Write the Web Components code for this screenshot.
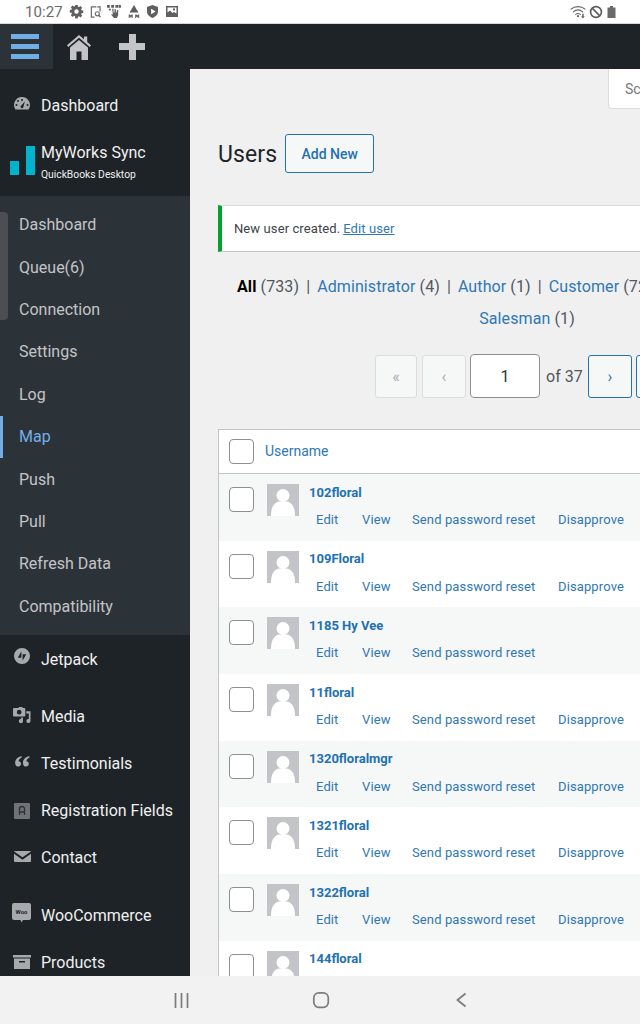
<!DOCTYPE html>
<html lang="en"><head><meta charset="utf-8"><title>Users</title>
<style>
html,body{margin:0;padding:0;background:#f0f0f1}
body{font-family:Roboto,"Liberation Sans",sans-serif;width:640px;height:1024px;overflow:hidden}
</style></head><body>
<app-shell></app-shell>
<script>
const ICONS={
 gear:'<path fill="#5f5f5f" fill-rule="evenodd" d="M5.300 0h2.400l.3 1.700 1 .4L10.500 1l1.700 1.700-1.100 1.500.4 1 1.700.3v2.400l-1.700.3-.4 1 1.100 1.500-1.700 1.700-1.500-1.100-1 .4-.3 1.700H5.300L5 11.200l-1-.4-1.500 1.100L.8 10.200l1.100-1.500-.4-1L-.2 7.400V5l1.700-.3.4-1L.8 2.200 2.500.5 4 1.600l1-.4zM6.500 4.300a2.200 2.200 0 1 0 0 4.400 2.200 2.200 0 0 0 0-4.400z"/>',
 shot:'<path fill="none" stroke="#6a6a6a" stroke-width="1.300" d="M7 1H1.500v11H5M11 6V1H8"/><circle cx="8" cy="8.500" r="2.200" fill="none" stroke="#6a6a6a" stroke-width="1.200"/><path stroke="#6a6a6a" stroke-width="1.300" d="M9.500 10l2 2"/>',
 hand:'<path fill="#5f5f5f" d="M0 0h3v3H0zM4.500 0h3v3h-3zM9 0h3v3H9zM12.500 0h2.500v3h-2.500zM2 4h2v2H2zM5.500 4h1.500v4h1V4.500h1.500V8h1V5.500H12V11l-1.500 3H7.500L4.500 10.500l.8-.8 1 .8z"/>',
 tri:'<path fill="#5f5f5f" d="M6 0l4.500 7.500h-9z"/><path fill="#5f5f5f" d="M0 9.500h1.200l.8 1 .8-1H4V13H3v-1.700L2.200 12.500h-.4L1 11.300V13H0zM6.500 9.500h1.200l.8 1 .8-1H10.500V13h-1v-1.700L8.700 12.500h-.4L7.500 11.300V13h-1z" transform="translate(.7 0)"/>',
 shield:'<path fill="#5f5f5f" fill-rule="evenodd" d="M6 0l6 2v5c0 3.500-3 6-6 7-3-1-6-3.500-6-7V2zM4.500 4v6l5-3z"/>',
 pic:'<path fill="#5f5f5f" fill-rule="evenodd" d="M0 0h12v11H0zM1.500 1.500v5l2.500-2L6.500 7l1.500-1 2.500 1.500v-6zM8 2.300a1.100 1.100 0 1 1 0 2.200 1.100 1.100 0 0 1 0-2.200z"/>',
 wifi:'<g fill="none" stroke="#666" stroke-width="1.200" stroke-linecap="round"><path d="M1 4.500C5 .8 12 .8 16 4.500"/><path d="M3.500 7.300C6.500 4.800 10.500 4.800 13.500 7.300"/><path d="M6 10c1.600-1.200 3.400-1.200 5 0"/></g><circle cx="8.500" cy="12" r="1.200" fill="#666"/><path fill="#666" d="M13 9.500h1.600V12h1.200L13.800 14.500 11.800 12H13z"/>',
 block:'<circle cx="8" cy="8" r="6.200" fill="none" stroke="#5f5f5f" stroke-width="1.900"/><path stroke="#5f5f5f" stroke-width="1.900" d="M3.600 3.600l8.800 8.800"/>',
 batt:'<path fill="#6a6a6a" d="M3 0h3v1.500h2.500V12H.5V1.500H3z"/>',
 home:'<path fill="#c3c4c7" d="M12 1l5 4.200V2.500h3.200v5.400L24 11.200l-1.300 1.700L12 3.800 1.300 12.900 0 11.200z"/><path fill="#c3c4c7" fill-rule="evenodd" d="M12 6l9 7.400V26H3V13.400zM9.500 17.500V26h5v-8.500z"/>',
 gauge:'<path fill="#a7aaad" fill-rule="evenodd" d="M8 0a8 8 0 0 1 6.600 12.500H1.400A8 8 0 0 1 8 0zM4 3a1 1 0 1 0 0 2 1 1 0 0 0 0-2zM8 2a1 1 0 1 0 0 2 1 1 0 0 0 0-2zM2.500 7a1 1 0 1 0 0 2 1 1 0 0 0 0-2zM13.500 7a1 1 0 1 0 0 2 1 1 0 0 0 0-2zM10.800 4.500L7.500 8.300a1.500 1.500 0 1 0 2 1.200z"/>',
 jet:'<path fill="#a7aaad" fill-rule="evenodd" d="M8 0a8 8 0 1 1 0 16A8 8 0 0 1 8 0zM7.400 3.200L3.800 9.700h3.600zM8.600 6.300v6.500l3.600-6.500z"/>',
 media:'<path fill="#a7aaad" fill-rule="evenodd" d="M4 1h1.500L6.500 0h3l1 1H12a1 1 0 0 1 1 1v7a1 1 0 0 1-1 1H1a1 1 0 0 1-1-1V2a1 1 0 0 1 1-1zM6.500 3a2.500 2.500 0 1 0 0 5 2.500 2.500 0 0 0 0-5z"/><path fill="#a7aaad" d="M14 4.500h4.500v10.300a2.200 2.200 0 1 1-1.800-2.100V7h-2.700zM10.500 11v4a2.200 2.200 0 1 1-2-2.200V11z"/>',
 quote:'<path fill="#a7aaad" d="M7 0C3 1 0 3.500 0 7.500 0 10 1.400 11.500 3.400 11.500c1.800 0 3-1.300 3-3C6.400 6.800 5.200 5.700 3.700 5.700 4.100 4 5.300 2.700 7 2zM15.500 0c-4 1-7 3.500-7 7.500 0 2.500 1.400 4 3.400 4 1.800 0 3-1.300 3-3 0-1.700-1.200-2.800-2.700-2.800.4-1.700 1.600-3 3.300-3.700z"/>',
 reg:'<path fill="#6f7377" d="M0 1a1 1 0 0 1 1-1h14a1 1 0 0 1 1 1v14a1 1 0 0 1-1 1H1a1 1 0 0 1-1-1z"/><path fill="none" stroke="#2c3338" stroke-width="1.300" d="M5.500 12V6a2.500 2.500 0 0 1 5 0v6M5.500 9h5"/>',
 mail:'<path fill="#a7aaad" d="M.8 0h15.400a.8.8 0 0 1 .7.500L8.500 6.300.1.500A.8.8 0 0 1 .8 0zM0 2.800l8.500 5.900L17 2.800V10a1 1 0 0 1-1 1H1a1 1 0 0 1-1-1z"/>',
 woo:'<path fill="#a7aaad" d="M2 0h15a2 2 0 0 1 2 2v13a2 2 0 0 1-2 2h-6l-1.500 2.500L8.500 17H2a2 2 0 0 1-2-2V2a2 2 0 0 1 2-2z"/><text x="9.500" y="11" text-anchor="middle" font-family="Roboto,sans-serif" font-weight="700" font-size="6" fill="#1d2327">Woo</text>',
 box:'<path fill="#a7aaad" fill-rule="evenodd" d="M0 0h18v2.500H0zM1 3.500h16V14H1zM6 6v1.400h6V6z"/>'
};
const svg=(n,w,h,vb)=>`<svg width="${w}" height="${h}" viewBox="${vb||`0 0 ${w} ${h}`}" aria-hidden="true" style="display:block;overflow:visible">${ICONS[n]}</svg>`;
const def=(name,css,html)=>customElements.define(name,class extends HTMLElement{
 constructor(){super();this.attachShadow({mode:'open'});}
 connectedCallback(){this.shadowRoot.innerHTML=`<style>${css}</style>`+(typeof html==='function'?html(this):html);}
});

def('status-bar',`:host{display:flex;align-items:center;height:24px;flex:none;background:#fff;padding-left:25px;color:#6a6a6a;box-sizing:border-box;border-bottom:1px solid #d8d8d8}
.t{font:15px/1 Roboto,sans-serif;letter-spacing:.1px;margin-right:7px;padding-top:1px}
.i{display:flex;align-items:center}
.r{margin-left:auto;display:flex;align-items:center;padding-right:24px}`,
`<span class="t">10:27</span>
<span class="i">
<span style="margin-right:8px">${svg('gear',12,13)}</span>
<span style="margin-right:6px">${svg('shot',11,12,'0 0 12 13')}</span>
<span style="margin-right:7px">${svg('hand',14,13,'0 0 15 14')}</span>
<span style="margin-right:8px">${svg('tri',11,13)}</span>
<span style="margin-right:8px">${svg('shield',11,13,'0 0 12 14')}</span>
<span>${svg('pic',12,11)}</span></span>
<span class="r"><span style="margin-right:3px">${svg('wifi',16,14,'0 0 17 15')}</span><span style="margin-right:4px">${svg('block',14,14,'0 0 16 16')}</span>${svg('batt',9,12)}</span>`);

def('admin-bar',`:host{display:flex;height:45px;flex:none;background:#1d2327;align-items:center}
.m{width:53px;height:45px;box-sizing:border-box;padding-left:11px;background:#2c3338;display:flex;flex-direction:column;justify-content:center;gap:5px;align-items:flex-start}
.m i{display:block;width:28px;height:5px;background:#72aee6}
.h{margin-left:14px}
.p{margin-left:28px;width:26px;height:26px;position:relative}
.p:before,.p:after{content:"";position:absolute;background:#c3c4c7}
.p:before{left:9.500px;top:0;width:7px;height:26px}
.p:after{left:0;top:9.500px;width:26px;height:7px}`,
`<div class="m"><i></i><i></i><i></i></div><div class="h">${svg('home',24,26)}</div><div class="p"></div>`);

def('menu-item',`:host{display:flex;align-items:center;box-sizing:border-box;height:var(--h,47px);color:#f0f0f1;font-size:16px}
.i{width:41px;flex:none;display:flex;justify-content:flex-start;padding-left:var(--ix,13px);box-sizing:border-box;transform:translateY(var(--iy,-1px))}`,
h=>`<span class="i">${svg(h.getAttribute('icon'),+h.getAttribute('w'),+h.getAttribute('h'),h.getAttribute('vb'))}</span><slot></slot>`);

def('sub-item',`:host{display:flex;align-items:center;height:42.400px;padding-left:19px;color:#c3c4c7;font-size:16px;box-sizing:border-box}
:host([active]){color:#72aee6;box-shadow:inset 3px 0 0 #72aee6}`,`<slot></slot>`);

def('side-menu',`:host{display:block;width:190px;flex:none;background:#1d2327;position:relative;overflow:hidden;box-shadow:1px 0 0 #e0e0e0}
.top{padding-top:12px}
.brand{height:67px;display:flex;box-sizing:border-box}
.logo{width:41px;flex:none;display:flex;align-items:flex-end;gap:7px;padding:17px 0 21px 10px;box-sizing:border-box}
.logo i{display:block;width:9px;background:#00b4d0}
.tt{color:#f0f0f1;font-size:16px;line-height:20px;padding-top:14px}
.st{color:#f0f0f1;font-size:10.300px;line-height:14px;margin-top:5px}
.sub{background:#2c3338;height:439px;padding-top:7.600px;box-sizing:border-box}
.gap{height:10px}
.gap2{height:11px}
.sb{position:absolute;left:0;top:143px;width:8px;height:108px;background:#4b4f53;border-radius:0 4px 4px 0}`,
`<div class="top"><menu-item icon="gauge" w="16" h="13" style="--h:48px;--iy:-2px;--ix:14px">Dashboard</menu-item></div>
<div class="brand"><div class="logo"><i style="height:14px"></i><i style="height:29px"></i></div>
<div><div class="tt">MyWorks Sync</div><div class="st">QuickBooks Desktop</div></div></div>
<div class="sub"><sub-item>Dashboard</sub-item><sub-item>Queue(6)</sub-item><sub-item>Connection</sub-item><sub-item>Settings</sub-item><sub-item>Log</sub-item><sub-item active>Map</sub-item><sub-item>Push</sub-item><sub-item>Pull</sub-item><sub-item>Refresh Data</sub-item><sub-item>Compatibility</sub-item></div>
<menu-item icon="jet" w="16" h="16" style="--h:48px;--iy:-3px;--ix:14px">Jetpack</menu-item>
<div class="gap"></div>
<menu-item icon="media" w="18" h="17" vb="0 0 19 18" style="--iy:-1px">Media</menu-item>
<menu-item icon="quote" w="15" h="11" vb="0 0 16 12" style="--iy:-2px;--ix:15px">Testimonials</menu-item>
<menu-item icon="reg" w="16" h="16" style="--iy:0;--ix:14px">Registration Fields</menu-item>
<menu-item icon="mail" w="17" h="11" style="--iy:-1px;--ix:14px">Contact</menu-item>
<div class="gap2"></div>
<menu-item icon="woo" w="19" h="19.500" vb="0 0 19 19.500" style="--iy:-3px;--ix:12px">WooCommerce</menu-item>
<menu-item icon="box" w="18" h="14" style="--iy:-1px;--ix:13px">Products</menu-item>
<div class="sb"></div>`);

def('add-button',`:host{display:inline-flex;align-items:center;justify-content:center;width:89px;height:39px;box-sizing:border-box;border:1.500px solid #2271b1;border-radius:3px;background:#f6f7f7;color:#2271b1;font-size:14px;font-weight:500}`,`<slot></slot>`);

def('page-btn',`:host{display:flex;align-items:center;justify-content:center;box-sizing:border-box;width:44px;height:43px;border:1px solid #dcdcde;border-radius:3px;background:#f6f7f7;color:#a7aaad;font-size:16px}
:host([on]){border:1.300px solid #2271b1;color:#2271b1;background:#f6f7f7}`,`<slot></slot>`);

def('user-row',`:host{display:flex;box-sizing:border-box;height:66.670px;background:#fff;border-left:1px solid #c3c4c7;font-size:13px;color:#2f78b3}
:host([alt]){background:#f6f7f7}
.c{width:25px;height:25px;box-sizing:border-box;border:1.300px solid #8c8f94;border-radius:4px;background:#fff;margin:13px 0 0 10px;flex:none}
.a{width:32px;height:32px;background:#c3c4c7;margin:10px 0 0 13px;flex:none;overflow:hidden}
.a svg{display:block}
.b{margin-left:10px;padding-top:10.800px;white-space:nowrap}
.n{font-weight:700;font-size:13px;line-height:16px;color:#2271b1}
.l{display:flex;margin:11.200px 0 0 7px;line-height:16px;letter-spacing:.12px}
.l span{display:block}`,
h=>`<div class="c"></div><div class="a"><svg width="32" height="32" viewBox="0 0 32 32"><circle cx="16" cy="11.500" r="6.500" fill="#fff"/><path fill="#fff" d="M4 32c0-9 3-13.500 8-14.500h8c5 1 8 5.500 8 14.500z"/></svg></div>
<div class="b"><div class="n">${h.getAttribute('name')}</div><div class="l"><span style="width:46px">Edit</span><span style="width:50px">View</span><span style="width:146px">Send password reset</span>${h.hasAttribute('nodis')?'':'<span>Disapprove</span>'}</div></div>`);

def('users-page',`:host{display:block;flex:1;min-width:0;position:relative;overflow:hidden;background:#f0f0f1;color:#3c434a}
.in{width:618px;margin-left:28px;padding-top:65px}
.sc{position:absolute;left:418px;top:0;width:60px;height:40px;box-sizing:border-box;background:#fff;border:1px solid #dcdcde;border-top:0;border-radius:0 0 4px 4px;padding:12px 0 0 16px;font-size:14px;color:#777}
.hd{display:flex;align-items:center;height:39px;gap:8px}
h1{margin:0;font-weight:400;font-size:23px;color:#1d2327;letter-spacing:.1px;padding-top:1px}
.nt{margin-top:32px;height:47px;box-sizing:border-box;background:#fff;border-left:4px solid #00a32a;border-top:1px solid #dcdcde;border-bottom:1px solid #c3c4c7;display:flex;align-items:center;padding-left:12px;font-size:13px;letter-spacing:.1px}
.nt a{color:#2f78b3;text-decoration:underline;margin-left:3px}
.f{margin-top:19px;font-size:16px;line-height:32px;color:#50575e;letter-spacing:.1px}
.f .l1{padding-left:19px;white-space:nowrap}
.f .l2{text-align:center}
.f a{color:#2f78b3}.f b{color:#000;font-weight:700}
.f s{text-decoration:none;margin:0 7px}
.pg{margin-top:19px;display:flex;padding-left:157px;align-items:center;height:44px;gap:4px;white-space:nowrap}
.pg page-btn:first-child{width:42px;margin-right:1px}
.ip{width:70px;height:44px;box-sizing:border-box;background:#fff;border:1.300px solid #8c8f94;border-radius:4px;display:flex;align-items:center;justify-content:center;font-size:16px;color:#2c3338}
.of{margin:0 2px 0 2px;font-size:16px;color:#50575e;width:36px}
.th{margin-top:31px;height:45px;box-sizing:border-box;background:#fff;border:1px solid #c3c4c7;border-right:0;display:flex;align-items:center;padding-left:10px;color:#2f78b3;font-size:14px}
.th i{display:block;width:25px;height:25px;box-sizing:border-box;border:1.300px solid #8c8f94;border-radius:4px;background:#fff;margin-right:11px}
.th span{position:relative;top:-1px}`,
`<div class="sc">Sc</div><div class="in">
<div class="hd"><h1>Users</h1><add-button>Add New</add-button></div>
<div class="nt">New user created.<a>Edit user</a></div>
<div class="f"><div class="l1"><b>All</b> (733)<s>|</s><a>Administrator</a> (4)<s>|</s><a>Author</a> (1)<s>|</s><a>Customer</a> (727)</div><div class="l2"><a>Salesman</a> (1)</div></div>
<div class="pg"><page-btn>«</page-btn><page-btn>‹</page-btn><div class="ip">1</div><span class="of">of 37</span><page-btn on>›</page-btn><page-btn on>»</page-btn></div>
<div class="th"><i></i><span>Username</span></div>
<user-row alt name="102floral"></user-row><user-row name="109Floral"></user-row><user-row alt name="1185 Hy Vee" nodis></user-row><user-row name="11floral"></user-row><user-row alt name="1320floralmgr"></user-row><user-row name="1321floral"></user-row><user-row alt name="1322floral"></user-row><user-row name="144floral"></user-row>
</div>`);

def('nav-bar',`:host{display:flex;height:48px;flex:none;background:#f2f2f2;align-items:center;padding-left:174px;box-sizing:border-box}
svg{display:block}`,
`<svg width="300" height="20" viewBox="0 0 300 20" fill="none" stroke="#7c7c7c" stroke-width="1.700"><path d="M1.500 3v15M7.500 3v15M13.500 3v15"/><rect x="139.800" y="2.800" width="14.500" height="14.500" rx="5"/><path d="M291.500 3.500L283.500 10l8 6.500" stroke-width="1.800"/></svg>`);

def('app-shell',`:host{display:flex;flex-direction:column;width:640px;height:1024px;overflow:hidden}
.main{flex:1;display:flex;min-height:0}`,
`<status-bar></status-bar><admin-bar></admin-bar><div class="main"><side-menu></side-menu><users-page></users-page></div><nav-bar></nav-bar>`);
</script>
</body></html>
